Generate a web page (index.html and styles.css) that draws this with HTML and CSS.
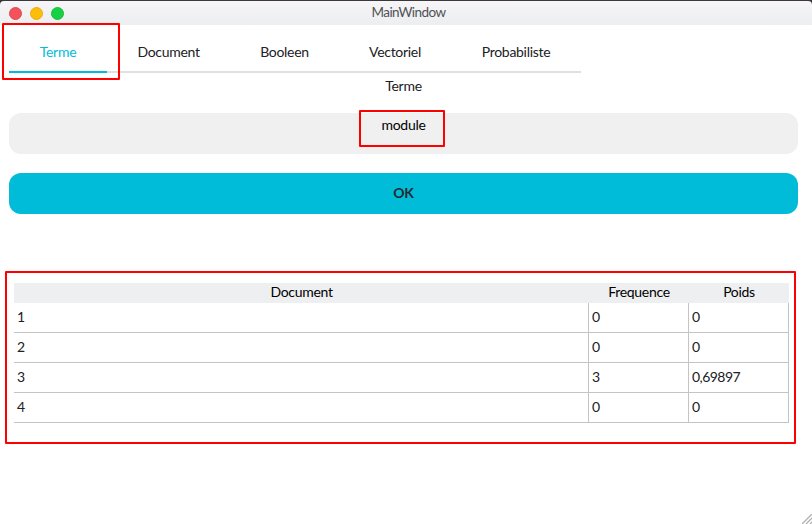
FILE: index.html
```
<!DOCTYPE html>
<html lang="fr">
<head>
<meta charset="utf-8">
<title>MainWindow</title>
<link rel="stylesheet" href="styles.css">
</head>
<body>
<div class="window">
  <header class="titlebar">
    <div class="controls"><span class="dot close"></span><span class="dot minimize"></span><span class="dot zoom"></span></div>
    <span class="title">MainWindow</span>
  </header>
  <main>
    <nav class="tabs">
      <a class="tab active">Terme</a>
      <a class="tab">Document</a>
      <a class="tab">Booleen</a>
      <a class="tab">Vectoriel</a>
      <a class="tab">Probabiliste</a>
    </nav>
    <div class="label">Terme</div>
    <div class="field">module</div>
    <button class="ok">OK</button>
    <table>
      <thead><tr><th>Document</th><th>Frequence</th><th>Poids</th></tr></thead>
      <tbody>
        <tr><td>1</td><td>0</td><td>0</td></tr>
        <tr><td>2</td><td>0</td><td>0</td></tr>
        <tr><td>3</td><td>3</td><td>0,69897</td></tr>
        <tr><td>4</td><td>0</td><td>0</td></tr>
      </tbody>
    </table>
  </main>
  <div class="mark mark-tab"></div>
  <div class="mark mark-field"></div>
  <div class="mark mark-table"></div>
  <svg class="grip" width="10" height="10" viewBox="0 0 10 10"><path d="M0 10L10 0M4 10L10 4M8 10L10 8" stroke="#b2b2b2" stroke-width="1.3"/></svg>
</div>
</body>
</html>
```
FILE: styles.css
```
* { box-sizing: border-box; }
body { margin: 0; background: #3a383c; font: 14px/20px Lato, "Liberation Sans", sans-serif; letter-spacing: -.3px; color: #202124; }
.window { position: relative; width: 812px; height: 524px; overflow: hidden; padding-top: 1px; }
.titlebar { height: 24px; display: grid; grid-template-columns: 1fr auto 1fr; background: linear-gradient(#f6f5f8, #eceef0); border-radius: 4px 4px 0 0; padding: 0 0 0 9px; }
.controls { display: flex; gap: 8px; padding-top: 6px; }
.dot { width: 13px; height: 13px; border-radius: 50%; }
.close { background: #f5515a; border: 1px solid #df4951; }
.minimize { background: #fcbe09; border: 1px solid #e9ad10; }
.zoom { background: #16d143; border: 1px solid #1bbc3f; }
.title { color: #505154; font-size: 13.5px; line-height: 23px; margin-right: 4px; letter-spacing: -.55px; }
main { height: 499px; background: #fff; padding: 8px 14px 0 9px; }
.tabs { width: 572px; height: 40px; display: grid; grid-template-columns: 98px 123px 109px 112px 130px; }
.tab { border-bottom: 2px solid #e0e0e0; text-align: center; line-height: 38px; }
.active { color: #00bcd8; border-color: #00bcd8; }
.label { height: 40px; text-align: center; padding-top: 3px; line-height: 19px; }
.field, .ok { display: block; width: 789px; height: 41px; border-radius: 12px; text-align: center; }
.field { background: #f0f0f0; color: #000; line-height: 23px; margin-bottom: 19px; }
.ok { background: #00bcd8; border: 0; padding: 0 0 2px; font: bold 14px/39px Lato, "Liberation Sans", sans-serif; letter-spacing: -.3px; color: #202b30; }
table { table-layout: fixed; width: 775px; margin: 69px 0 0 5px; border-collapse: separate; border-spacing: 0; }
th { height: 20px; padding: 0 0 2px; background: #eeeff1; font-weight: normal; line-height: 18px; color: #000; }
th:nth-child(1) { width: 575px; }
td { height: 30px; padding: 0 3px 2px; border-right: 1px solid #c4c4c4; border-bottom: 1px solid #c4c4c4; line-height: 26px; letter-spacing: -.55px; }
.mark { position: absolute; border: 2px solid #f00; border-radius: 1px; }
.mark-tab { left: 2px; top: 23px; width: 118px; height: 57px; }
.mark-field { left: 359px; top: 110px; width: 86px; height: 37px; }
.mark-table { left: 5px; top: 271px; width: 791px; height: 173px; }
.grip { position: absolute; right: 0; bottom: 0; }
```
